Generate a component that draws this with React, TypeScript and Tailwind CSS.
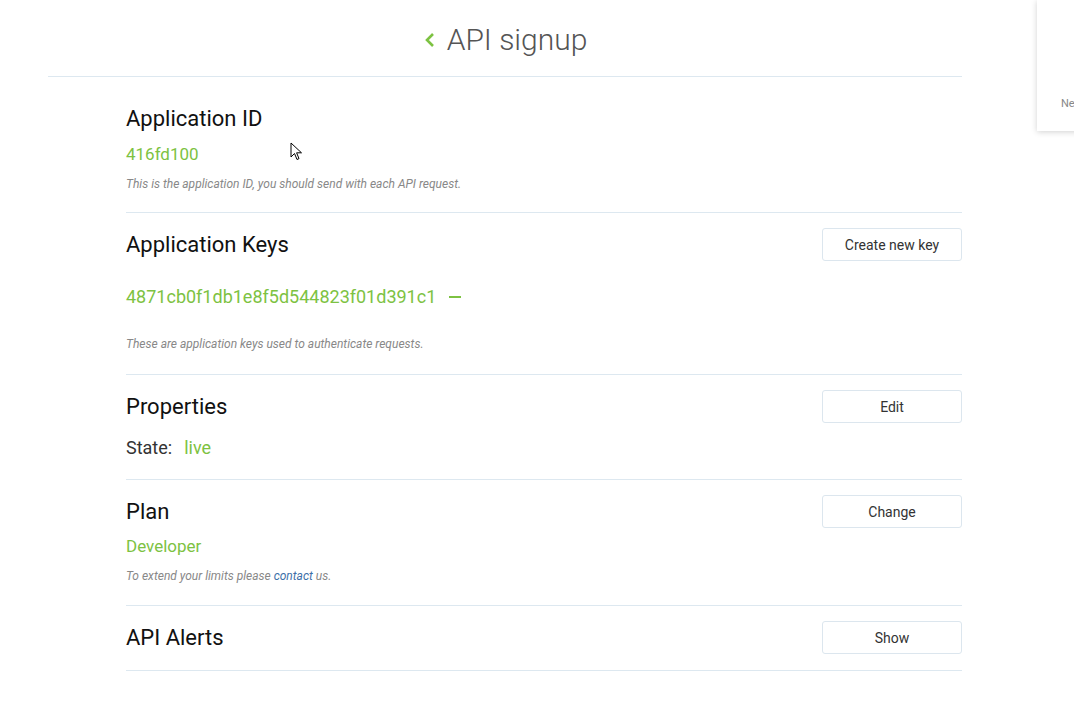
import React from 'react';

const green = 'text-[#7dc242]';

function Btn({ label }: { label: string }) {
  return (
    <button className="w-[140px] h-[33px] border border-[#dce6ee] rounded-[3px] bg-white text-[14px] text-[#333] leading-none">
      {label}
    </button>
  );
}

function Heading({ children }: { children: React.ReactNode }) {
  return <h2 className="text-[22px] leading-[28px] text-[#111]">{children}</h2>;
}

function Note({ children }: { children: React.ReactNode }) {
  return <p className="text-[12px] leading-[16px] italic text-[#888]">{children}</p>;
}

export default function App() {
  return (
    <div className="relative w-[1074px] h-[719px] overflow-hidden bg-white" style={{ fontFamily: 'Roboto, "Liberation Sans", sans-serif' }}>
      {/* header */}
      <div className="ml-[48px] w-[914px] border-b border-[#dde8f0] h-[77px] flex items-center justify-center">
        <div className="flex items-center gap-[10px] mt-[4px]">
          <svg width="14" height="18" viewBox="0 0 14 18" fill="none">
            <path d="M10 3 L4 9 L10 15" stroke="#7dc242" strokeWidth="2.6" />
          </svg>
          <h1 className="text-[30px] font-light text-[#555] leading-none">API signup</h1>
        </div>
      </div>

      <div className="ml-[126px] w-[836px]">
        {/* Application ID */}
        <section className="border-b border-[#dde8f0] pt-[25px] pb-[20px]">
          <div className="h-[33px] flex items-center">
            <Heading>Application ID</Heading>
          </div>
          <div className={`mt-[7px] text-[17px] leading-[24px] ${green}`}>416fd100</div>
          <div className="mt-[10px]">
            <Note>This is the application ID, you should send with each API request.</Note>
          </div>
        </section>

        {/* Application Keys */}
        <section className="border-b border-[#dde8f0] pt-[15px] pb-[22px]">
          <div className="h-[33px] flex items-center justify-between">
            <Heading>Application Keys</Heading>
            <Btn label="Create new key" />
          </div>
          <div className={`mt-[24px] flex items-center text-[18px] leading-[24px] ${green}`}>
            <span>4871cb0f1db1e8f5d544823f01d391c1</span>
            <span className="ml-[13px] w-[12px] h-[2px] bg-[#7dc242]" />
          </div>
          <div className="mt-[27px]">
            <Note>These are application keys used to authenticate requests.</Note>
          </div>
        </section>

        {/* Properties */}
        <section className="border-b border-[#dde8f0] pt-[15px] pb-[19px]">
          <div className="h-[33px] flex items-center justify-between">
            <Heading>Properties</Heading>
            <Btn label="Edit" />
          </div>
          <div className="mt-[13px] flex items-baseline text-[18px] leading-[24px]">
            <span className="text-[#333]">State:</span>
            <span className={`ml-[12px] ${green}`}>live</span>
          </div>
        </section>

        {/* Plan */}
        <section className="border-b border-[#dde8f0] pt-[15px] pb-[21px]">
          <div className="h-[33px] flex items-center justify-between">
            <Heading>Plan</Heading>
            <Btn label="Change" />
          </div>
          <div className={`mt-[6px] text-[17px] leading-[24px] ${green}`}>Developer</div>
          <div className="mt-[10px]">
            <Note>
              To extend your limits please <span className="text-[#3d6fa8]">contact</span> us.
            </Note>
          </div>
        </section>

        {/* API Alerts */}
        <section className="border-b border-[#dde8f0] pt-[15px] pb-[16px]">
          <div className="h-[33px] flex items-center justify-between">
            <Heading>API Alerts</Heading>
            <Btn label="Show" />
          </div>
        </section>
      </div>

      {/* side card peeking in */}
      <div className="absolute left-[1037px] top-0 w-[200px] h-[131px] bg-white shadow-[0_1px_6px_rgba(0,0,0,0.18)]">
        <span className="absolute left-[24px] top-[96px] text-[11px] text-[#888]">New</span>
      </div>

      {/* mouse cursor */}
      <svg className="absolute left-[290px] top-[142px]" width="13" height="20" viewBox="0 0 13 20">
        <path d="M1 1 L1 15 L4.5 11.5 L7 17.5 L9 16.6 L6.6 10.8 L11.5 10.8 Z" fill="#fff" stroke="#000" strokeWidth="1" strokeLinejoin="round" />
      </svg>
    </div>
  );
}
